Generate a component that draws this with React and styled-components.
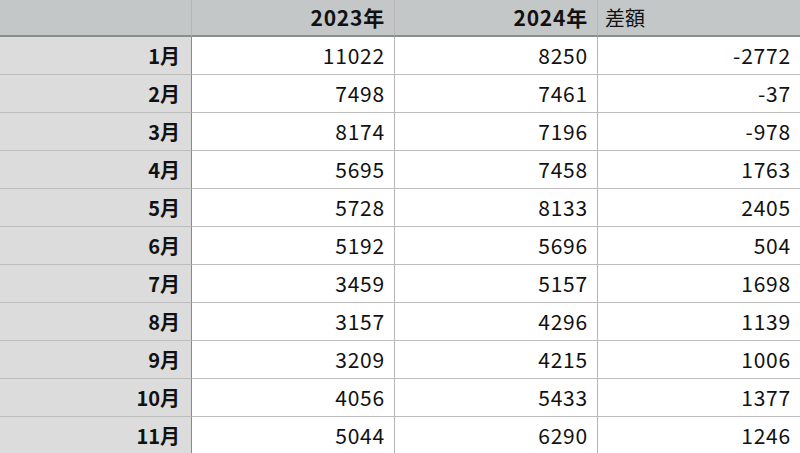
import React from "react";
import styled, { createGlobalStyle } from "styled-components";

const Global = createGlobalStyle`
  html, body { margin: 0; padding: 0; background: #ffffff; overflow: hidden; }
  body { font-family: "Noto Sans CJK JP", "Noto Sans", sans-serif; color: #111; }
`;

const Sheet = styled.div`
  display: grid;
  grid-template-columns: 192px 203px 203px 202px;
  width: 800px;
  height: 453px;
  overflow: hidden;
  align-content: start;
`;

const Cell = styled.div`
  box-sizing: border-box;
  height: ${(p) => (p.$head ? "37px" : "38px")};
  display: flex;
  align-items: center;
  justify-content: ${(p) => (p.$left ? "flex-start" : "flex-end")};
  padding: ${(p) => (p.$left ? "1px 0 0 7px" : p.$label ? "0 11px 0 0" : "0 9px 0 0")};
  background: ${(p) => (p.$head ? "#c4c7c7" : p.$label ? "#dcdcdc" : "#ffffff")};
  border-bottom: ${(p) => (p.$head ? "2px solid #8c8c8c" : "1px solid #bdbdbd")};
  border-right: ${(p) =>
    p.$label && !p.$head ? "1px solid #8a8a8a" : p.$last ? "none" : "1px solid #b5b5b5"};
  font-size: ${(p) => (p.$label || p.$left ? "20px" : "21px")};
  letter-spacing: ${(p) => (p.$label || p.$left ? "0" : "0.8px")};
  font-weight: ${(p) => (p.$bold ? 700 : 400)};
  line-height: 1;
  white-space: nowrap;
`;

const rows = [
  ["1月", 11022, 8250, -2772],
  ["2月", 7498, 7461, -37],
  ["3月", 8174, 7196, -978],
  ["4月", 5695, 7458, 1763],
  ["5月", 5728, 8133, 2405],
  ["6月", 5192, 5696, 504],
  ["7月", 3459, 5157, 1698],
  ["8月", 3157, 4296, 1139],
  ["9月", 3209, 4215, 1006],
  ["10月", 4056, 5433, 1377],
  ["11月", 5044, 6290, 1246],
];

export default function App() {
  return (
    <>
      <Global />
      <Sheet>
        <Cell $head $label />
        <Cell $head $bold>2023年</Cell>
        <Cell $head $bold>2024年</Cell>
        <Cell $head $left $last>差額</Cell>
        {rows.map((r) => (
          <React.Fragment key={r[0]}>
            <Cell $label $bold>{r[0]}</Cell>
            <Cell>{r[1]}</Cell>
            <Cell>{r[2]}</Cell>
            <Cell $last>{r[3]}</Cell>
          </React.Fragment>
        ))}
      </Sheet>
    </>
  );
}
